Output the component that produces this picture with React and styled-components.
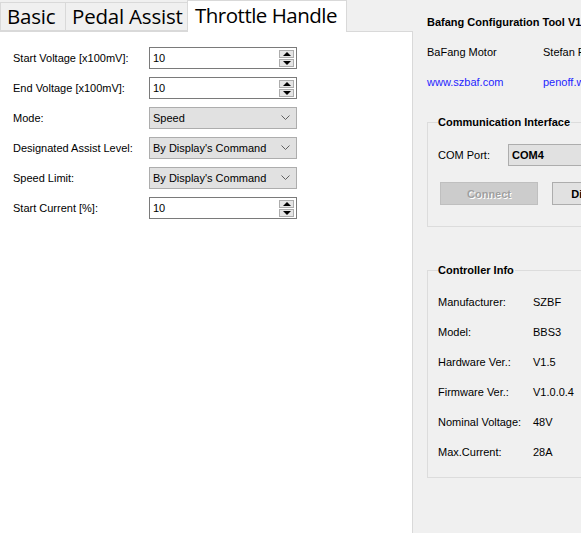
import React from 'react'
import styled, { createGlobalStyle } from 'styled-components'

const GlobalStyle = createGlobalStyle`
  html, body {
    margin: 0;
    padding: 0;
    background: #f0f0f0;
  }
  body {
    font-family: "Liberation Sans", Arial, sans-serif;
    font-size: 11px;
    color: #000;
  }
`

const Window = styled.div`
  display: flex;
  width: 581px;
  height: 533px;
  overflow: hidden;
  background: #f0f0f0;
`

const TabArea = styled.div`
  display: flex;
  flex-direction: column;
  width: 413px;
  flex-shrink: 0;
`

const TabStrip = styled.div`
  display: flex;
  align-items: flex-end;
  height: 31px;
`

const Tab = styled.div`
  position: relative;
  box-sizing: border-box;
  width: ${p => p.$width}px;
  height: ${p => (p.$active ? '32px' : '29px')};
  margin-bottom: ${p => (p.$active ? '-1px' : '0')};
  margin-left: ${p => (p.$first ? '0' : '-1px')};
  padding-left: ${p => (p.$active ? '7px' : '6px')};
  border: 1px solid #d9d9d9;
  border-bottom: ${p => (p.$active ? 'none' : '1px solid #d9d9d9')};
  background: ${p => (p.$active ? '#fff' : '#f0f0f0')};
  z-index: ${p => (p.$active ? 2 : 1)};
  font-family: "Open Sans", "Noto Sans", sans-serif;
  font-size: ${p => (p.$active ? '20.5px' : '20.5px')};
  line-height: ${p => (p.$active ? '29px' : '27px')};
  letter-spacing: ${p => (p.$active ? '-0.5px' : '-0.2px')};
  white-space: nowrap;
  overflow: hidden;
`

const TabPanel = styled.div`
  flex: 1;
  background: #fff;
  border-top: 1px solid #d9d9d9;
  border-right: 1px solid #d9d9d9;
  padding: 15px 0 0 13px;
`

const Form = styled.div`
  display: grid;
  grid-template-columns: 136px 148px;
  grid-auto-rows: 22px;
  row-gap: 8px;
  align-items: center;
`

const Label = styled.div`
  white-space: nowrap;
  margin-top: -1px;
`

const SpinBox = styled.div`
  box-sizing: border-box;
  position: relative;
  height: 22px;
  border: 1px solid #7a7a7a;
  background: #fff;
  display: flex;
  align-items: center;
  padding-left: 3px;
`

const SpinButtons = styled.div`
  position: absolute;
  right: 2px;
  top: 2px;
  display: flex;
  flex-direction: column;
`

const SpinButton = styled.div`
  box-sizing: border-box;
  width: 15px;
  height: 8px;
  margin-top: ${p => (p.$down ? '1px' : '0')};
  background: #e5e5e5;
  border: 1px solid #acacac;
  display: flex;
  align-items: center;
  justify-content: center;
`

const Arrow = styled.div`
  width: 0;
  height: 0;
  border-left: 4px solid transparent;
  border-right: 4px solid transparent;
  ${p => (p.$down ? 'border-top: 4px solid #000;' : 'border-bottom: 4px solid #000;')}
`

const Combo = styled.div`
  box-sizing: border-box;
  height: 22px;
  border: 1px solid #adadad;
  background: #e1e1e1;
  display: flex;
  align-items: center;
  justify-content: space-between;
  padding: 0 6px 0 3px;
  font-weight: ${p => (p.$bold ? 'bold' : 'normal')};
  white-space: nowrap;
`

const Chevron = () => (
  <svg width="9" height="6" viewBox="0 0 9 6">
    <path d="M0.5 0.5 L4.5 4.5 L8.5 0.5" fill="none" stroke="#606060" strokeWidth="1" />
  </svg>
)

const SpinInput = ({ value }) => (
  <SpinBox>
    {value}
    <SpinButtons>
      <SpinButton><Arrow /></SpinButton>
      <SpinButton $down><Arrow $down /></SpinButton>
    </SpinButtons>
  </SpinBox>
)

const Select = ({ value }) => (
  <Combo>
    {value}
    <Chevron />
  </Combo>
)

const Sidebar = styled.div`
  flex: 1;
  min-width: 0;
  overflow: hidden;
  padding: 7px 0 0 14px;
  white-space: nowrap;
`

const Title = styled.div`
  font-weight: bold;
  height: 30px;
  line-height: 30px;
`

const InfoLine = styled.div`
  display: grid;
  grid-template-columns: 116px 200px;
  height: 30px;
  line-height: 30px;
`

const Link = styled.span`
  color: #1f1fff;
`

const Group = styled.fieldset`
  margin: ${p => p.$top}px 0 0 0;
  padding: 0 0 ${p => p.$bottom}px 10px;
  border: 1px solid #dcdcdc;
  border-right: none;
  width: 300px;
  min-width: 0;
`

const Legend = styled.legend`
  font-weight: bold;
  padding: 0 1px 0 0;
  line-height: 13px;
`

const PortRow = styled.div`
  display: grid;
  grid-template-columns: 70px 200px;
  align-items: center;
  margin-top: 15px;
`

const ButtonRow = styled.div`
  display: flex;
  gap: 14px;
  margin-top: 16px;
  padding-left: 2px;
`

const Button = styled.div`
  box-sizing: border-box;
  width: 98px;
  height: 23px;
  display: flex;
  align-items: center;
  justify-content: center;
  font-weight: bold;
  background: ${p => (p.$disabled ? '#cccccc' : '#e1e1e1')};
  border: 1px solid ${p => (p.$disabled ? '#bfbfbf' : '#adadad')};
  color: ${p => (p.$disabled ? '#a0a0a0' : '#000')};
  text-shadow: ${p => (p.$disabled ? '1px 1px 0 #fff' : 'none')};
`

const InfoGrid = styled.div`
  display: grid;
  grid-template-columns: 95px 80px;
  grid-auto-rows: 30px;
  align-items: center;
  margin-top: 10px;
`

const throttleFields = [
  { label: 'Start Voltage [x100mV]:', spin: '10' },
  { label: 'End Voltage [x100mV]:', spin: '10' },
  { label: 'Mode:', select: 'Speed' },
  { label: 'Designated Assist Level:', select: "By Display's Command" },
  { label: 'Speed Limit:', select: "By Display's Command" },
  { label: 'Start Current [%]:', spin: '10' },
]

const controllerInfo = [
  ['Manufacturer:', 'SZBF'],
  ['Model:', 'BBS3'],
  ['Hardware Ver.:', 'V1.5'],
  ['Firmware Ver.:', 'V1.0.0.4'],
  ['Nominal Voltage:', '48V'],
  ['Max.Current:', '28A'],
]

export default function App() {
  return (
    <Window>
      <GlobalStyle />
      <TabArea>
        <TabStrip>
          <Tab $first $width={66}>Basic</Tab>
          <Tab $width={123}>Pedal Assist</Tab>
          <Tab $active $width={160}>Throttle Handle</Tab>
        </TabStrip>
        <TabPanel>
          <Form>
            {throttleFields.map(f => (
              <React.Fragment key={f.label}>
                <Label>{f.label}</Label>
                {f.spin ? <SpinInput value={f.spin} /> : <Select value={f.select} />}
              </React.Fragment>
            ))}
          </Form>
        </TabPanel>
      </TabArea>

      <Sidebar>
        <Title>Bafang Configuration Tool V1.0</Title>
        <InfoLine>
          <span>BaFang Motor</span>
          <span>Stefan Penoff</span>
        </InfoLine>
        <InfoLine>
          <Link>www.szbaf.com</Link>
          <Link>penoff.wordpress.com</Link>
        </InfoLine>

        <Group $top={19} $bottom={21}>
          <Legend>Communication Interface</Legend>
          <PortRow>
            <span>COM Port:</span>
            <Combo $bold>COM4</Combo>
          </PortRow>
          <ButtonRow>
            <Button $disabled>Connect</Button>
            <Button>Disconnect</Button>
          </ButtonRow>
        </Group>

        <Group $top={37} $bottom={10}>
          <Legend>Controller Info</Legend>
          <InfoGrid>
            {controllerInfo.map(([k, v]) => (
              <React.Fragment key={k}>
                <span>{k}</span>
                <span>{v}</span>
              </React.Fragment>
            ))}
          </InfoGrid>
        </Group>
      </Sidebar>
    </Window>
  )
}
